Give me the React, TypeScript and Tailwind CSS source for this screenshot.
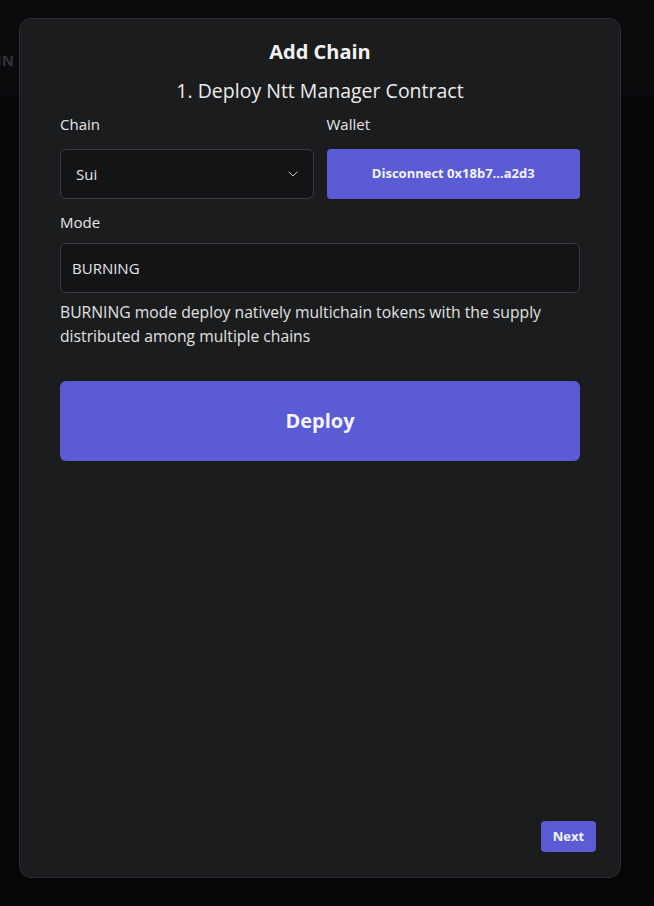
import { ChevronDown } from "lucide-react";

export default function App() {
  return (
    <div
      className="relative w-[654px] h-[906px] overflow-hidden bg-[#050608] text-[#e6e6e6]"
      style={{ fontFamily: '"Open Sans", "Noto Sans", sans-serif' }}
    >
      {/* page behind the overlay */}
      <div className="h-[96px] bg-[#0a0b0d] border-b border-[#0e0f12] pt-[49px]">
        <span className="block w-[14px] overflow-hidden whitespace-nowrap text-[15px] font-bold leading-[22px] text-[#34353a] [direction:rtl]">
          IN
        </span>
      </div>

      {/* modal */}
      <div className="absolute left-[19px] top-[18px] w-[602px] h-[860px] rounded-xl border border-[#2c2d30] bg-[#1b1c1e] flex flex-col">
        <div className="flex-1 px-10 pt-[20px]">
          <h2 className="text-center text-[20px] font-bold leading-[26px] text-[#f2f2f2]">Add Chain</h2>
          <h3 className="mt-[13px] text-center text-[19.5px] leading-[26px] text-[#ececec]">
            1. Deploy Ntt Manager Contract
          </h3>

          <div className="mt-[9px] grid grid-cols-2 gap-[13px]">
            <div>
              <p className="text-[15px] leading-[22px] text-[#e6e6e6]">Chain</p>
              <div className="mt-[14px] h-[50px] rounded-md border border-[#3b3c40] bg-[#131416] flex items-center justify-between pl-[15px] pr-[12px]">
                <span className="text-[15px] text-[#e6e6e6]">Sui</span>
                <ChevronDown size={16} strokeWidth={1.5} className="text-[#d0d0d0]" />
              </div>
            </div>
            <div>
              <p className="text-[15px] leading-[22px] text-[#e6e6e6]">Wallet</p>
              <button className="mt-[14px] w-full h-[50px] rounded bg-[#5b5bd6] text-[13px] font-bold text-[#f4f4ff]">
                Disconnect 0x18b7...a2d3
              </button>
            </div>
          </div>

          <p className="mt-[12px] text-[15px] leading-[22px] text-[#e6e6e6]">Mode</p>
          <div className="mt-[10px] h-[50px] rounded-md border border-[#3b3c40] bg-[#131416] flex items-center px-[11px]">
            <span className="text-[15px] text-[#e6e6e6]">BURNING</span>
          </div>
          <p className="mt-[7px] text-[15.7px] leading-[24px] text-[#e2e2e2]">
            BURNING mode deploy natively multichain tokens with the supply distributed among multiple chains
          </p>

          <button className="mt-[33px] w-full h-[80px] rounded-md bg-[#5b5bd6] text-[20px] font-bold text-[#f4f4ff]">
            Deploy
          </button>
        </div>

        <div className="flex justify-end px-6 pb-[25px]">
          <button className="h-[31px] w-[55px] rounded bg-[#5b5bd6] text-[13px] font-bold text-[#f4f4ff]">
            Next
          </button>
        </div>
      </div>
    </div>
  );
}
